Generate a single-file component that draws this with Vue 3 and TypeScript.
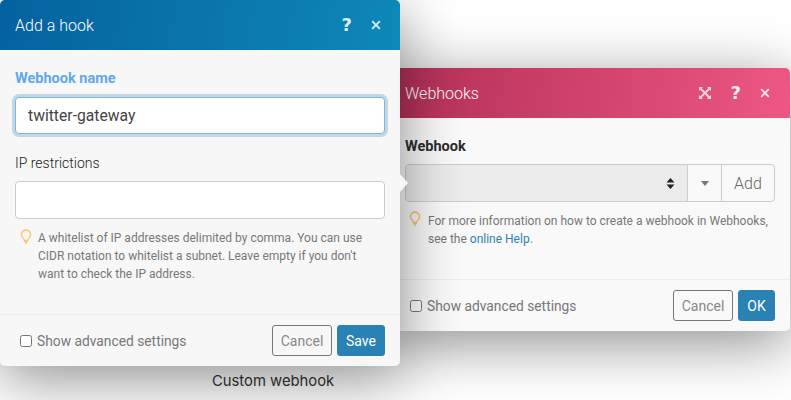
<script setup lang="ts">
const bulb = "M6 1a4.6 4.6 0 0 0-2.9 8.1c.6.6 1 1.3 1.1 2.2h3.6c.1-.9.5-1.6 1.1-2.2A4.6 4.6 0 0 0 6 1z";
</script>

<template>
  <div class="stage">
    <section class="win win-right">
      <header class="head head-pink">
        <span class="title">Webhooks</span>
        <span class="tools">
          <svg class="expand" viewBox="0 0 14 14" width="14" height="14" aria-hidden="true">
            <path d="M1 1h4L3.7 2.300 11.700 10.300 13 9v4H9l1.300-1.300L2.300 3.700 1 5zM13 1v4l-1.300-1.300L8.500 6.900 7.100 5.500 10.300 2.300 9 1zM1 13V9l1.300 1.300 3.200-3.200 1.400 1.400-3.200 3.200L5 13z" fill="#fbd3de"/>
          </svg>
          <span class="q">?</span>
          <svg class="x" viewBox="0 0 10 10" width="10" height="10" aria-hidden="true"><path d="M1.200 1.200l7.600 7.600M8.800 1.200L1.200 8.800" stroke="#fff" stroke-opacity=".85" stroke-width="1.900"/></svg>
        </span>
      </header>
      <div class="body">
        <label class="lab-strong">Webhook</label>
        <div class="combo">
          <div class="sel">
            <svg viewBox="0 0 9 13" width="9" height="13" aria-hidden="true"><path d="M4.500 1L8.500 5.500H.5zM4.500 12L.5 7.500H8.500z" fill="#222"/></svg>
          </div>
          <div class="caret"><i></i></div>
          <div class="add">Add</div>
        </div>
        <div class="help help-right">
          <svg class="bulb" viewBox="0 0 12 15" width="12" height="15" aria-hidden="true"><path :d="bulb" fill="none" stroke="#f3c269" stroke-width="1.300"/><path d="M4.300 12.700h3.400M5 14.200h2" stroke="#f3c269" stroke-width="1.200"/></svg>
          <p>For more information on how to create a webhook in Webhooks, see the <a>online Help</a>.</p>
        </div>
      </div>
      <footer class="foot">
        <label class="chk"><input type="checkbox" />Show advanced settings</label>
        <span class="btns">
          <button class="btn cancel">Cancel</button>
          <button class="btn ok ok-narrow">OK</button>
        </span>
      </footer>
    </section>

    <div class="caption">Custom webhook</div>

    <section class="win win-left">
      <header class="head head-blue">
        <span class="title">Add a hook</span>
        <span class="tools">
          <span class="q">?</span>
          <svg class="x" viewBox="0 0 10 10" width="10" height="10" aria-hidden="true"><path d="M1.200 1.200l7.600 7.600M8.800 1.200L1.200 8.800" stroke="#fff" stroke-opacity=".85" stroke-width="1.900"/></svg>
        </span>
      </header>
      <div class="body">
        <label class="lab-blue">Webhook name</label>
        <input class="inp focus" value="twitter-gateway" />
        <label class="lab">IP restrictions</label>
        <input class="inp plain" />
        <div class="help help-left">
          <svg class="bulb" viewBox="0 0 12 15" width="12" height="15" aria-hidden="true"><path :d="bulb" fill="none" stroke="#f9c46b" stroke-width="1.300"/><path d="M4.300 12.700h3.400M5 14.200h2" stroke="#f9c46b" stroke-width="1.200"/></svg>
          <p>A whitelist of IP addresses delimited by comma. You can use CIDR notation to whitelist a subnet. Leave empty if you don't want to check the IP address.</p>
        </div>
      </div>
      <footer class="foot">
        <label class="chk"><input type="checkbox" />Show advanced settings</label>
        <span class="btns">
          <button class="btn cancel">Cancel</button>
          <button class="btn ok ok-wide">Save</button>
        </span>
      </footer>
      <span class="arrow"></span>
    </section>
  </div>
</template>

<style scoped>
.stage {
  position: relative;
  width: 791px;
  height: 400px;
  overflow: hidden;
  background: #fff;
  font-family: Roboto, "Liberation Sans", sans-serif;
  color: #333;
}
.win {
  position: absolute;
  display: flex;
  flex-direction: column;
  width: 400px;
  background: #f7f7f7;
  border-radius: 5px;
  box-shadow: 0 12px 60px rgba(0, 0, 0, 0.45);
}
.win-left { left: 0; top: 0; height: 366px; }
.win-right { left: 390px; top: 68px; height: 263px; background: #f9f9f9; }
.head {
  display: flex;
  align-items: center;
  justify-content: space-between;
  height: 50px;
  flex: none;
  padding: 0 19px 0 15px;
  color: #fff;
  border-radius: 5px 5px 0 0;
}
.win-right .head { padding-right: 20px; }
.head-blue { background: linear-gradient(100deg, #05619f, #0e88b8); }
.head-pink { background: linear-gradient(100deg, #b22f56, #ee5784); }
.title { font-size: 16px; font-weight: 300; }
.tools { display: flex; align-items: center; gap: 19px; }
.q {
  font-family: "DejaVu Sans", sans-serif;
  font-size: 18px;
  font-weight: 700;
  line-height: 20px;
  opacity: 0.88;
}
.body { flex: 1; display: flex; flex-direction: column; padding: 20px 15px 0; }
.lab-blue { font-size: 14.500px; font-weight: 700; line-height: 18px; color: #5fa9e8; }
.lab-strong { font-size: 14.500px; font-weight: 700; line-height: 18px; color: #2d2d2d; }
.lab { font-size: 14px; font-weight: 300; line-height: 18px; margin-top: 20px; color: #222; }
.inp {
  display: block;
  box-sizing: border-box;
  width: 370px;
  background: #fff;
  border-radius: 4px;
  font-family: inherit;
  color: #444;
  outline: none;
}
.focus {
  height: 37px;
  margin-top: 9px;
  padding: 0 12px;
  font-size: 15.700px;
  border: 1px solid #7db7da;
  box-shadow: 0 0 0 3px rgba(42, 120, 175, 0.25);
}
.plain { height: 38px; margin-top: 9px; border: 1px solid #ccc; }
.help { display: flex; font-size: 12px; line-height: 18px; color: #777; }
.help p { margin: 0; }
.help a { color: #2b82b5; }
.help-left { margin: 10px 0 0 5px; gap: 6px; }
.help-left p { width: 335px; }
.help-right { margin: 10px 0 0 4px; gap: 7px; }
.help-right .bulb { margin-top: -1px; }
.help-right p { width: 345px; }
.bulb { flex: none; }
.combo {
  display: flex;
  box-sizing: border-box;
  width: 370px;
  height: 38px;
  margin-top: 8px;
  border: 1px solid #ccc;
  border-radius: 4px;
  color: #888;
}
.sel {
  flex: 1;
  display: flex;
  align-items: center;
  justify-content: flex-end;
  padding-right: 12px;
  background: #ebebeb;
  border-radius: 3px 0 0 3px;
}
.caret {
  display: flex;
  align-items: center;
  justify-content: center;
  width: 33px;
  border-left: 1px solid #ccc;
}
.caret i {
  width: 0;
  height: 0;
  border: 4.500px solid transparent;
  border-top: 5px solid #777;
  border-bottom: 0;
}
.add {
  display: flex;
  align-items: center;
  justify-content: center;
  width: 52px;
  border-left: 1px solid #ccc;
  font-size: 16px;
  font-weight: 300;
  color: #666;
}
.foot {
  display: flex;
  align-items: center;
  justify-content: space-between;
  height: 52px;
  flex: none;
  box-sizing: border-box;
  padding: 0 15px 0 20px;
  border-top: 1px solid #ececec;
}
.chk {
  display: flex;
  align-items: center;
  gap: 5px;
  font-size: 13.800px;
  color: #777;
}
.chk input { width: 12px; height: 12px; margin: 1px 0 0; }
.btns { display: flex; gap: 5px; }
.btn {
  height: 31px;
  box-sizing: border-box;
  border-radius: 3px;
  font-family: inherit;
  font-size: 14px;
  padding: 0;
}
.cancel { width: 60px; background: transparent; border: 1px solid #777; color: #888; }
.ok { background: #2a82b4; border: 1px solid #2a82b4; color: #fff; }
.ok-wide { width: 48px; }
.ok-narrow { width: 37px; }
.arrow {
  position: absolute;
  right: -8px;
  top: 174px;
  width: 0;
  height: 0;
  border-top: 9px solid transparent;
  border-bottom: 9px solid transparent;
  border-left: 8px solid #f7f7f7;
}
.caption {
  position: absolute;
  left: 212px;
  top: 372px;
  font-family: Inter, "Liberation Sans", sans-serif;
  font-size: 14.800px;
  line-height: 18px;
  color: #333;
}
</style>
